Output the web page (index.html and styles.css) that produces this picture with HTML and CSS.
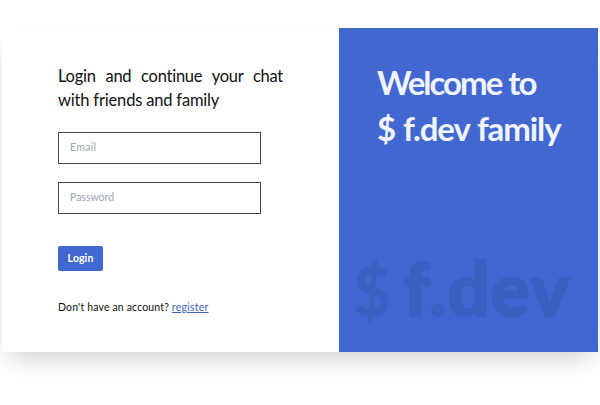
FILE: index.html
```html
<!DOCTYPE html>
<html lang="en">
<head>
<meta charset="utf-8">
<title>Login</title>
<link rel="stylesheet" href="styles.css">
</head>
<body>
<main class="card">
  <section class="login">
    <h1 class="heading"><span class="heading-first">Login and continue your chat</span> <span class="heading-last">with friends and family</span></h1>
    <form class="form">
      <input class="field" type="email" placeholder="Email">
      <input class="field" type="password" placeholder="Password">
      <button class="submit" type="button">Login</button>
    </form>
    <p class="signup"><span class="question">Don't have an account?</span> <a class="register" href="#">register</a></p>
  </section>
  <aside class="welcome">
    <h2 class="title"><span class="title-first">Welcome to</span><span class="title-last">$ f.dev family</span></h2>
    <div class="watermark"><span class="dollar">$</span><span class="brand">f.dev</span></div>
  </aside>
</main>
</body>
</html>
```
FILE: styles.css
```css
* { box-sizing: border-box; }
body {
  margin: 0;
  padding: 28px 2px 0;
  height: 405px;
  overflow: hidden;
  background: #fff;
  color: #111;
  font-family: Lato, "Liberation Sans", sans-serif;
}
.card {
  display: grid;
  grid-template-columns: 337px 1fr;
  height: 324px;
  background: #fff;
  box-shadow: 0 12px 24px -7px rgba(0, 0, 0, .2);
}
.login { padding: 36px 0 0 56px; }
.heading {
  margin: 0;
  width: 225px;
  font-size: 16.5px;
  font-weight: 400;
  line-height: 24px;
}
.heading-first { display: block; text-align-last: justify; white-space: nowrap; letter-spacing: -.25px; }
.heading-last { display: block; white-space: nowrap; letter-spacing: -.18px; }
.form {
  display: flex;
  flex-direction: column;
  align-items: flex-start;
  margin-top: 20px;
}
.field {
  width: 203px;
  height: 32px;
  margin: 0 0 18px;
  padding: 0 11px 2px;
  border: 1px solid #444;
  border-radius: 0;
  background: #fff;
  font: 10.5px Lato, sans-serif;
}
.field[type="email"] { letter-spacing: .3px; }
.submit {
  width: 45px;
  height: 25px;
  margin-top: 14px;
  padding: 0;
  border: 0;
  border-radius: 2px;
  background: #4267d0;
  color: #fff;
  font: 700 10.5px/25px Lato, sans-serif;
  letter-spacing: .1px;
}
.field::placeholder { color: #9ca3af; opacity: 1; }
.signup { margin: 28px 0 0; font-size: 10.5px; line-height: 16px; white-space: nowrap; }
.question { letter-spacing: .16px; }
.register { color: #4062bd; text-decoration: underline; letter-spacing: .25px; }
.welcome {
  display: flex;
  flex-direction: column;
  justify-content: space-between;
  padding: 31px 0 21px 38px;
  background: #4267d0;
}
.title {
  margin: 0;
  color: #f0f4ff;
  font-size: 33px;
  font-weight: 700;
  line-height: 46px;
  white-space: nowrap;
}
.title-first, .title-last { display: block; }
.title-first { letter-spacing: -2px; word-spacing: 1px; }
.title-last { letter-spacing: -1.1px; word-spacing: 1px; }
.watermark {
  display: flex;
  align-items: baseline;
  margin-left: -24px;
  color: #3b5fc2;
  font-size: 74px;
  line-height: 80px;
  white-space: nowrap;
}
.dollar { width: 50px; font-weight: 700; font-size: 66px; }
.brand { font-weight: 900; -webkit-text-stroke: 1.5px #3b5fc2; letter-spacing: .8px; }
```
